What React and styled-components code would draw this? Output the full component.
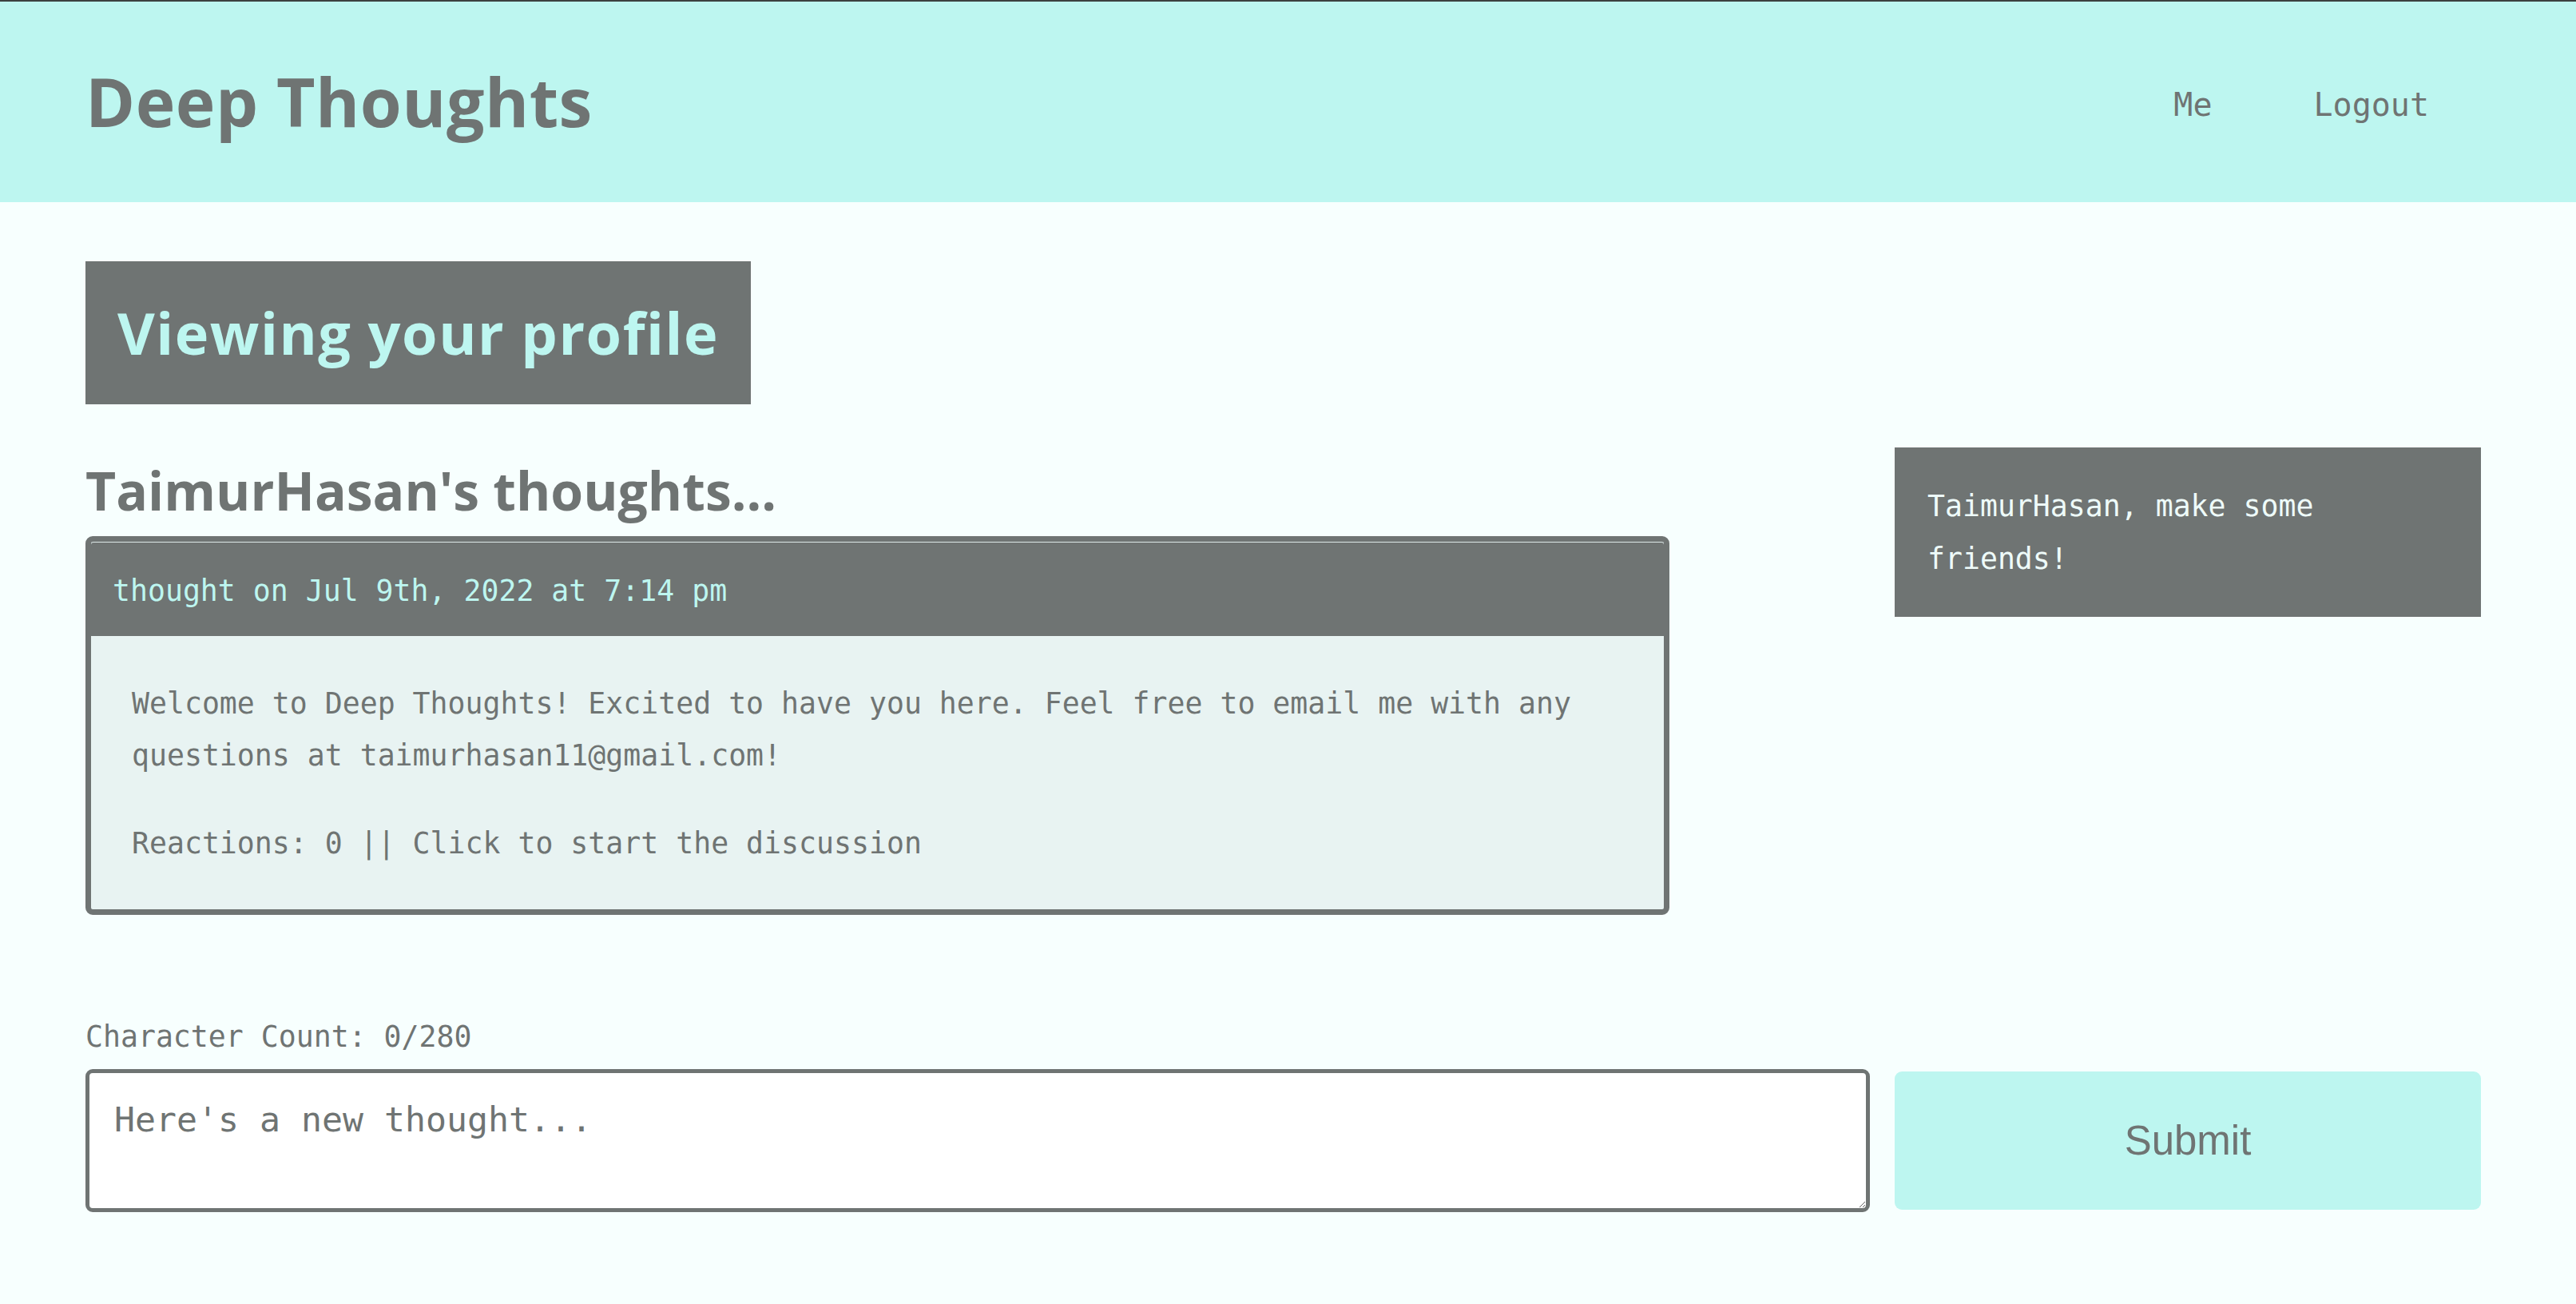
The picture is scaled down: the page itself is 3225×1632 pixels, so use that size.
import React from 'react';
import styled, { createGlobalStyle } from 'styled-components';

const GlobalStyle = createGlobalStyle`
  * {
    box-sizing: border-box;
  }
  html,
  body {
    margin: 0;
    padding: 0;
    background: #f7fffe;
    min-height: 100%;
  }
  body {
    font-family: 'DejaVu Sans Mono', 'Liberation Mono', monospace;
    color: #6f7473;
  }
`;

const Page = styled.div`
  min-height: 1632px;
  background: #f7fffe;
`;

const Header = styled.header`
  height: 253px;
  background: #bdf6f0;
  border-top: 2px solid #3c403f;
  display: flex;
  align-items: center;
  justify-content: space-between;
  padding: 0 119px 0 107px;
`;

const Brand = styled.h1`
  margin: 0;
  font-family: 'Open Sans', 'Noto Sans', sans-serif;
  font-weight: 700;
  font-size: 84px;
  line-height: 1.2;
  color: #6f7473;
  letter-spacing: 0.5px;
`;

const Nav = styled.nav`
  display: flex;
  gap: 127px;
  padding-right: 65px;
  margin-top: 7px;
`;

const NavLink = styled.a`
  font-family: 'DejaVu Sans Mono', monospace;
  font-size: 40px;
  color: #6f7473;
  text-decoration: none;
  cursor: pointer;
`;

const Main = styled.main`
  padding: 74px 119px 100px 107px;
`;

const ProfileBadge = styled.h2`
  display: inline-block;
  margin: 0;
  padding: 47px 40px;
  background: #6f7473;
  color: #bdf6f0;
  font-family: 'Open Sans', 'Noto Sans', sans-serif;
  font-weight: 700;
  font-size: 72px;
  line-height: 85px;
  letter-spacing: 1.5px;
`;

const Row = styled.div`
  display: flex;
  justify-content: space-between;
  align-items: flex-start;
  margin-top: 54px;
`;

const LeftCol = styled.section`
  width: 1983px;
`;

const SectionTitle = styled.h3`
  margin: 14px 0 18px;
  font-family: 'Open Sans', 'Noto Sans', sans-serif;
  font-weight: 700;
  font-size: 66px;
  line-height: 79px;
  color: #6f7473;
`;

const Card = styled.article`
  border: 7px solid #6f7473;
  border-radius: 9px;
  background: #e8f3f2;
  overflow: hidden;
`;

const CardHeader = styled.div`
  background: #6f7473;
  color: #bdf6f0;
  font-size: 36.5px;
  line-height: 58px;
  padding: 33px 27px 27px;
  border-radius: 3px 3px 0 0;
  box-shadow: inset 0 1px 0 #dde8e7;
`;

const CardBody = styled.div`
  padding: 52px 51px 50px;
  font-size: 36.5px;
  line-height: 65px;
  color: #6f7473;
`;

const Paragraph = styled.p`
  margin: 0;
  & + & {
    margin-top: 45px;
  }
`;

const FriendsBox = styled.aside`
  width: 734px;
  background: #6f7473;
  color: #eefbf9;
  font-size: 36.5px;
  line-height: 66px;
  padding: 41px 41px 39px;
`;

const Form = styled.form`
  margin-top: 131px;
`;

const CountLabel = styled.p`
  margin: 0;
  font-size: 36.5px;
  line-height: 44px;
  color: #6f7473;
`;

const FormRow = styled.div`
  display: flex;
  align-items: center;
  gap: 31px;
  margin-top: 18px;
`;

const TextArea = styled.textarea`
  flex: 1;
  height: 179px;
  border: 5px solid #6f7473;
  border-radius: 9px;
  background: #ffffff;
  padding: 33px 31px;
  font-family: 'DejaVu Sans Mono', monospace;
  font-size: 43.2px;
  color: #6f7473;
  outline: none;
  &::placeholder {
    color: #6f7473;
    opacity: 1;
  }
`;

const SubmitButton = styled.button`
  width: 734px;
  height: 173px;
  border: none;
  border-radius: 9px;
  background: #bdf6f0;
  color: #6f7473;
  font-family: 'Liberation Sans', Arial, sans-serif;
  font-size: 51px;
  cursor: pointer;
`;

export default function App() {
  return (
    <Page>
      <GlobalStyle />
      <Header>
        <Brand>Deep Thoughts</Brand>
        <Nav>
          <NavLink>Me</NavLink>
          <NavLink>Logout</NavLink>
        </Nav>
      </Header>
      <Main>
        <ProfileBadge>Viewing your profile</ProfileBadge>
        <Row>
          <LeftCol>
            <SectionTitle>TaimurHasan's thoughts...</SectionTitle>
            <Card>
              <CardHeader>thought on Jul 9th, 2022 at 7:14 pm</CardHeader>
              <CardBody>
                <Paragraph>
                  Welcome to Deep Thoughts! Excited to have you here. Feel free to email me with any
                  questions at taimurhasan11@gmail.com!
                </Paragraph>
                <Paragraph>Reactions: 0 || Click to start the discussion</Paragraph>
              </CardBody>
            </Card>
          </LeftCol>
          <FriendsBox>TaimurHasan, make some friends!</FriendsBox>
        </Row>
        <Form onSubmit={(e) => e.preventDefault()}>
          <CountLabel>Character Count: 0/280</CountLabel>
          <FormRow>
            <TextArea placeholder="Here's a new thought..." />
            <SubmitButton type="submit">Submit</SubmitButton>
          </FormRow>
        </Form>
      </Main>
    </Page>
  );
}
